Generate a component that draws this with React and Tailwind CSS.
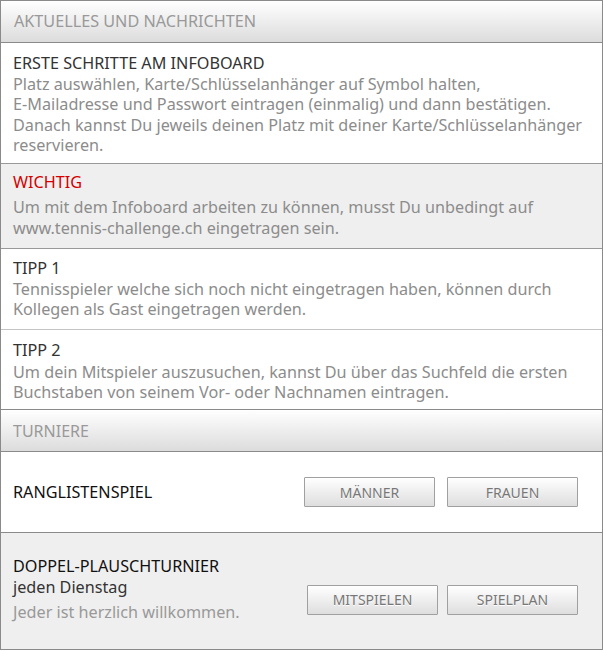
export default function App() {
  const font = { fontFamily: '"Noto Sans", "Open Sans", sans-serif' };
  const Btn = ({ children }) => (
    <button className="w-[131px] h-[30px] border border-[#a0a0a0] bg-gradient-to-b from-white to-[#dedede] text-[14px] text-[#777] [text-shadow:0_1px_0_#fff] rounded-[1px]">
      {children}
    </button>
  );
  return (
    <div style={font} className="w-[603px] h-[650px] border border-[#8a8a8a] bg-white flex flex-col text-[16.2px]">
      <div className="h-[42px] shrink-0 bg-gradient-to-b from-white to-[#dcdcdc] border-b border-[#8a8a8a] flex items-center px-[13px] text-[#999] leading-none">
        AKTUELLES UND NACHRICHTEN
      </div>
      <div className="h-[121px] shrink-0 bg-white border-b border-[#999] px-[12px] pt-[10px] leading-[20.6px]">
        <div className="text-[#333]">ERSTE SCHRITTE AM INFOBOARD</div>
        <div className="text-[#8c8c8c]">
          Platz auswählen, Karte/Schlüsselanhänger auf Symbol halten,<br />
          E-Mailadresse und Passwort eintragen (einmalig) und dann bestätigen.<br />
          Danach kannst Du jeweils deinen Platz mit deiner Karte/Schlüsselanhänger<br />
          reservieren.
        </div>
      </div>
      <div className="h-[85px] shrink-0 bg-[#efefef] border-b border-[#999] px-[12px] pt-[8px] leading-[20.6px]">
        <div className="text-[#d40000] mb-[4.5px]">WICHTIG</div>
        <div className="text-[#8c8c8c]">
          Um mit dem Infoboard arbeiten zu können, musst Du unbedingt auf<br />
          www.tennis-challenge.ch eingetragen sein.
        </div>
      </div>
      <div className="h-[81px] shrink-0 bg-white border-b border-[#c4c4c4] px-[12px] pt-[9px] leading-[20.6px]">
        <div className="text-[#333]">TIPP 1</div>
        <div className="text-[#8c8c8c]">
          Tennisspieler welche sich noch nicht eingetragen haben, können durch<br />
          Kollegen als Gast eingetragen werden.
        </div>
      </div>
      <div className="h-[80px] shrink-0 bg-white border-b border-[#8a8a8a] px-[12px] pt-[10px] leading-[20.6px]">
        <div className="text-[#333]">TIPP 2</div>
        <div className="text-[#8c8c8c] mt-[1px]">
          Um dein Mitspieler auszusuchen, kannst Du über das Suchfeld die ersten<br />
          Buchstaben von seinem Vor- oder Nachnamen eintragen.
        </div>
      </div>
      <div className="h-[42px] shrink-0 bg-gradient-to-b from-white to-[#dcdcdc] border-b border-[#8a8a8a] flex items-center px-[12px] text-[#999] text-[16px] leading-none">
        TURNIERE
      </div>
      <div className="h-[81px] shrink-0 bg-white border-b border-[#8a8a8a] flex items-center pl-[12px]">
        <div className="text-[#111] flex-1">RANGLISTENSPIEL</div>
        <div className="flex gap-[12px] mr-[24px]">
          <Btn>MÄNNER</Btn>
          <Btn>FRAUEN</Btn>
        </div>
      </div>
      <div className="flex-1 bg-[#efefef] flex items-start pl-[12px] pt-[23px] leading-[20.6px]">
        <div className="flex-1">
          <div className="text-[#111]">DOPPEL-PLAUSCHTURNIER</div>
          <div className="text-[#333]">jeden Dienstag</div>
          <div className="text-[#999] mt-[5px]">Jeder ist herzlich willkommen.</div>
        </div>
        <div className="flex gap-[9px] mr-[24px] mt-[29px]">
          <Btn>MITSPIELEN</Btn>
          <Btn>SPIELPLAN</Btn>
        </div>
      </div>
    </div>
  );
}
